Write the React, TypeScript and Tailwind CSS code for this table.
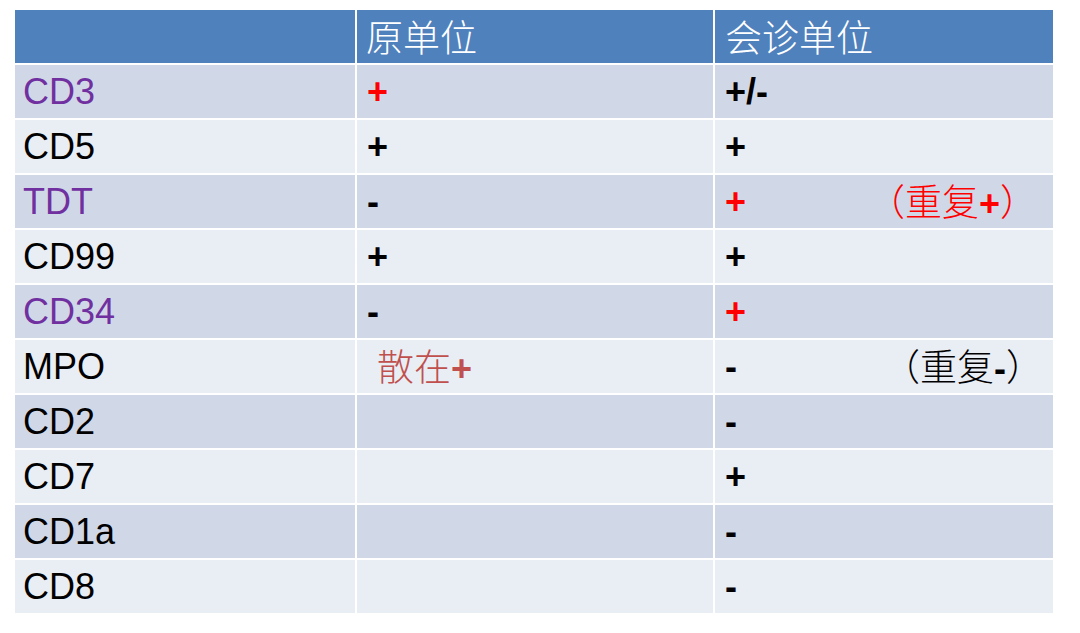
import type { ReactNode } from "react";

type Row = {
  marker: string;
  purple?: boolean;
  original?: ReactNode;
  consult?: ReactNode;
};

const latin = "font-['Liberation_Sans',Arial,sans-serif]";
const cjk = "font-['Noto_Sans_CJK_SC',sans-serif]";

const rows: Row[] = [
  {
    marker: "CD3",
    purple: true,
    original: <span className="font-bold text-[#ff0000]">+</span>,
    consult: <span className="font-bold">+/-</span>,
  },
  {
    marker: "CD5",
    original: <span className="font-bold">+</span>,
    consult: <span className="font-bold">+</span>,
  },
  {
    marker: "TDT",
    purple: true,
    original: <span className="font-bold">-</span>,
    consult: (
      <>
        <span className="font-bold text-[#ff0000]">+</span>
        <span className={`ml-[122px] whitespace-nowrap text-[37px] text-[#ff0000] ${cjk} font-light`}>
          （重复<span className={`${latin} font-bold text-[36px]`}>+</span>）
        </span>
      </>
    ),
  },
  {
    marker: "CD99",
    original: <span className="font-bold">+</span>,
    consult: <span className="font-bold">+</span>,
  },
  {
    marker: "CD34",
    purple: true,
    original: <span className="font-bold">-</span>,
    consult: <span className="font-bold text-[#ff0000]">+</span>,
  },
  {
    marker: "MPO",
    original: (
      <span className="whitespace-nowrap pl-[10px] text-[#c0504d]">
        <span className={`${cjk} text-[37px] font-light`}>散在</span>
        <span className="font-bold">+</span>
      </span>
    ),
    consult: (
      <>
        <span className="font-bold">-</span>
        <span className={`ml-[146px] whitespace-nowrap text-[37px] ${cjk} font-light`}>
          （重复<span className={`${latin} font-bold text-[36px]`}>-</span>）
        </span>
      </>
    ),
  },
  { marker: "CD2", consult: <span className="font-bold">-</span> },
  { marker: "CD7", consult: <span className="font-bold">+</span> },
  { marker: "CD1a", consult: <span className="font-bold">-</span> },
  { marker: "CD8", consult: <span className="font-bold">-</span> },
];

export default function App() {
  return (
    <div className={`h-[633px] w-[1080px] bg-white pl-[15px] pt-[10px] ${latin}`}>
      <div className="grid w-[1038px] grid-cols-[340px_356px_338px] gap-[2px] bg-white text-[36px] text-black">
        {/* Header */}
        <div className="h-[53px] bg-[#4f81bd]" />
        <div className={`flex h-[53px] items-center bg-[#4f81bd] pl-[9px] text-[37px] text-white ${cjk} font-light`}>
          原单位
        </div>
        <div className={`flex h-[53px] items-center bg-[#4f81bd] pl-[10px] text-[37px] text-white ${cjk} font-light`}>
          会诊单位
        </div>

        {rows.map((row, i) => {
          const bg = i % 2 === 0 ? "bg-[#d0d8e8]" : "bg-[#e9edf4]";
          return (
            <div key={row.marker} className="contents">
              <div
                className={`flex h-[53px] items-center pl-[8px] ${bg} ${
                  row.purple ? "text-[#7030a0]" : ""
                }`}
              >
                {row.marker}
              </div>
              <div className={`flex h-[53px] items-center pl-[10px] ${bg}`}>
                {row.original}
              </div>
              <div className={`flex h-[53px] items-center pl-[10px] ${bg}`}>
                {row.consult}
              </div>
            </div>
          );
        })}
      </div>
    </div>
  );
}
